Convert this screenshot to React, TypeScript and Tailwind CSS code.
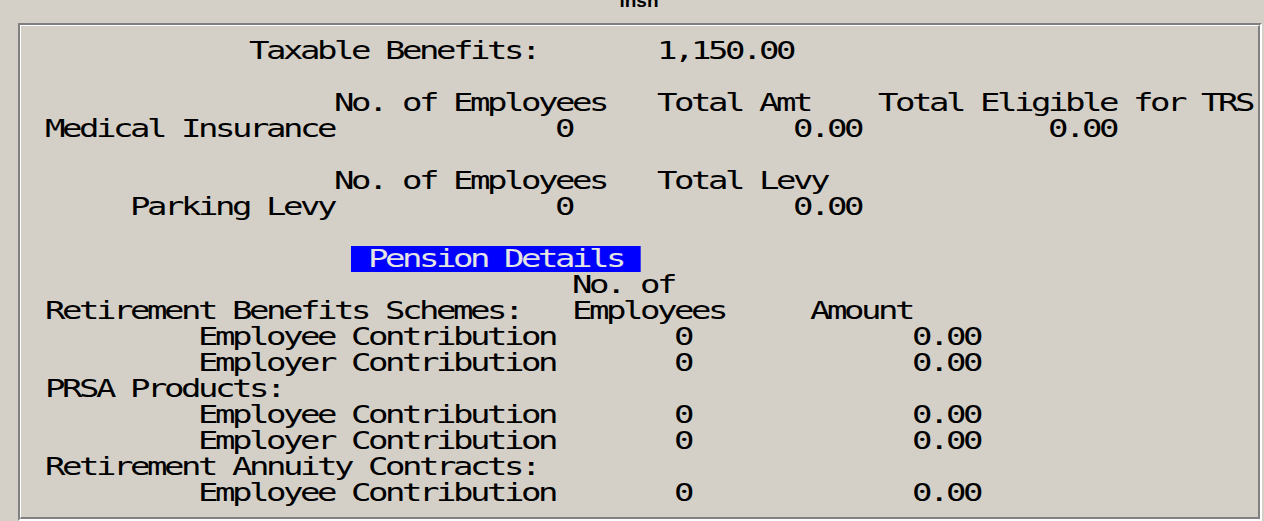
type Seg = [number, string]

// place text pieces at fixed character columns, like the old terminal form
function cols(segs: Seg[]): string {
  let s = ''
  for (const [c, t] of segs) s = s.padEnd(c, ' ') + t
  return s
}

const contrib = (label: string): Seg[] => [
  [9, label],
  [37, '0'],
  [51, '0.00'],
]

const rows: (Seg[] | 'pension')[] = [
  [[12, 'Taxable Benefits:'], [36, '1,150.00']],
  [],
  [[17, 'No. of Employees'], [36, 'Total Amt'], [49, 'Total Eligible for TRS']],
  [[0, 'Medical Insurance'], [30, '0'], [44, '0.00'], [59, '0.00']],
  [],
  [[17, 'No. of Employees'], [36, 'Total Levy']],
  [[5, 'Parking Levy'], [30, '0'], [44, '0.00']],
  [],
  'pension',
  [[31, 'No. of']],
  [[0, 'Retirement Benefits Schemes:'], [31, 'Employees'], [45, 'Amount']],
  contrib('Employee Contribution'),
  contrib('Employer Contribution'),
  [[0, 'PRSA Products:']],
  contrib('Employee Contribution'),
  contrib('Employer Contribution'),
  [[0, 'Retirement Annuity Contracts:']],
  contrib('Employee Contribution'),
]

export default function App() {
  return (
    <div className="h-[521px] w-[1264px] overflow-hidden bg-[#d4d0c8] text-black">
      {/* group caption, cut off at the top of the window */}
      <div className="flex h-[23px] justify-center">
        <span className="-mt-[9px] h-[19px] pl-[14px] font-['Liberation_Sans',Arial,sans-serif] text-[19px] font-bold leading-[19px]">
          insh
        </span>
      </div>

      {/* etched frame */}
      <div className="ml-[18px] h-[498px] w-[1244px] border-t-2 border-r-2 border-b-2 border-l-2 border-t-[#808080] border-r-white border-b-white border-l-[#808080]">
        <div className="h-full w-full border-t border-l border-r-2 border-b-2 border-t-white border-l-white border-r-[#808080] border-b-[#808080] pt-[12px] pl-[23.5px]">
          <div className="origin-top-left scale-x-[1.36] font-['DejaVu_Sans_Mono',monospace] text-[25px] leading-[26px] tracking-[-2.55px]">
            {rows.map((r, i) =>
              r === 'pension' ? (
                <div key={i} className="h-[26px] whitespace-pre">
                  {' '.repeat(18)}
                  <span className="inline-block h-[26px] bg-[#0000ff] text-[#e4e4e4]">
                    {' Pension Details '}
                  </span>
                </div>
              ) : (
                <div key={i} className="h-[26px] whitespace-pre">
                  {cols(r)}
                </div>
              ),
            )}
          </div>
        </div>
      </div>
    </div>
  )
}
